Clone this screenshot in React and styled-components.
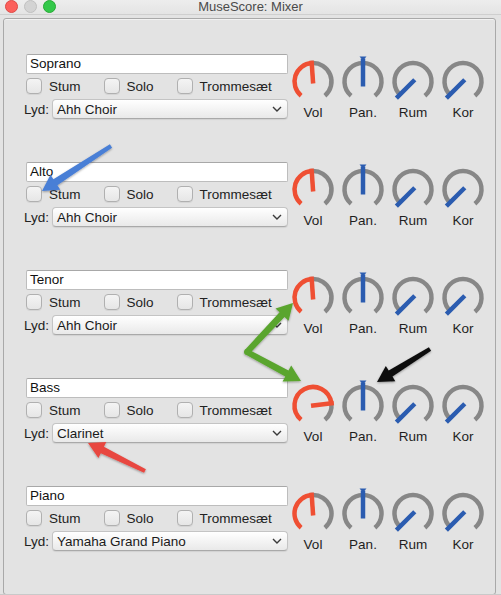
import React from "react";
import styled, { createGlobalStyle } from "styled-components";

const GlobalStyle = createGlobalStyle`
  html, body {
    margin: 0;
    padding: 0;
    background: #e3e3e3;
  }
  body {
    font-family: "Liberation Sans", Arial, sans-serif;
    font-size: 13px;
    color: #1e1e1e;
  }
`;

const Window = styled.div`
  position: relative;
  width: 501px;
  height: 595px;
  background: #e3e3e3;
  display: flex;
  flex-direction: column;
  overflow: hidden;
  box-sizing: border-box;
  border-bottom: 1px solid #c9c9c9;
`;

const TitleBar = styled.div`
  height: 14px;
  display: grid;
  grid-template-columns: 1fr auto 1fr;
  align-items: center;
  background: linear-gradient(#ededed, #e4e4e4);
  border-bottom: 1px solid #cfcfcf;
`;

const Lights = styled.div`
  display: flex;
  gap: 6px;
  padding-left: 5px;
  margin-top: -1px;
`;

const Light = styled.span`
  width: 11px;
  height: 11px;
  border-radius: 50%;
  background: ${({ $fill }) => $fill};
  border: 0.5px solid ${({ $edge }) => $edge};
`;

const Title = styled.div`
  font-size: 13px;
  color: #4a4a4a;
  line-height: 14px;
`;

const GroupBox = styled.div`
  flex: 1;
  margin: 3px 5px 2px 3px;
  border: 1px solid #a9a9a9;
  border-radius: 3px;
  padding: 35px 0 0 22px;
  box-shadow: inset 0 1px 0 #f2f2f2;
`;

const Channel = styled.div`
  display: grid;
  grid-template-columns: 262px auto;
  height: 108px;
  align-items: start;
`;

const Controls = styled.div`
  display: flex;
  flex-direction: column;
`;

const NameField = styled.div`
  height: 20px;
  box-sizing: border-box;
  background: #fff;
  border: 1px solid #bdbdbd;
  border-top-color: #a8a8a8;
  border-radius: 2px;
  padding-left: 3px;
  line-height: 18px;
  font-size: 13.5px;
  color: #111;
`;

const CheckRow = styled.div`
  display: flex;
  gap: 23px;
  margin-top: 4px;
  height: 16px;
  align-items: center;
`;

const CheckItem = styled.label`
  display: flex;
  align-items: center;
  gap: 7px;
  font-size: 13.5px;
  color: #222;
`;

const CheckBox = styled.span`
  width: 16px;
  height: 16px;
  box-sizing: border-box;
  border: 1px solid #b0b0b0;
  border-radius: 4px;
  background: linear-gradient(#f4f4f4, #e6e6e6);
  box-shadow: 0 1px 0 rgba(0, 0, 0, 0.06);
`;

const LydRow = styled.div`
  display: grid;
  grid-template-columns: auto 1fr;
  gap: 3px;
  align-items: center;
  margin-top: 5px;
`;

const LydLabel = styled.span`
  margin-left: -2px;
  font-size: 13.5px;
  color: #222;
`;

const Dropdown = styled.div`
  height: 20px;
  box-sizing: border-box;
  display: flex;
  align-items: center;
  justify-content: space-between;
  padding: 0 5px 0 4px;
  background: linear-gradient(#ffffff, #e9e9e9);
  border: 1px solid #c4c4c4;
  border-bottom-color: #a9a9a9;
  border-radius: 4px;
  box-shadow: 0 1px 1px rgba(0, 0, 0, 0.08);
  font-size: 13.5px;
  color: #1a1a1a;
`;

const Knobs = styled.div`
  display: flex;
  margin-top: 2px;
`;

const KnobCell = styled.div`
  width: 50px;
  display: flex;
  flex-direction: column;
  align-items: center;
`;

const KnobLabel = styled.span`
  margin-top: -1px;
  line-height: 16px;
  font-size: 13.5px;
  color: #1e1e1e;
`;

const Overlay = styled.svg`
  position: absolute;
  left: 0;
  top: 0;
  pointer-events: none;
`;

const GRAY = "#878787";
const RED = "#ef4f33";
const BLUE = "#2b5cb0";
const CX = 25;
const CY = 25.5;
const R = 18.5;

const pt = (deg, r) => {
  const a = (deg * Math.PI) / 180;
  return [CX + r * Math.sin(a), CY - r * Math.cos(a)];
};

const arc = (from, to) => {
  const [x1, y1] = pt(from, R);
  const [x2, y2] = pt(to, R);
  const large = to - from > 180 ? 1 : 0;
  return `M${x1} ${y1} A${R} ${R} 0 ${large} 1 ${x2} ${y2}`;
};

function Knob({ kind, angle }) {
  const lo = -140;
  const hi = 140;
  if (kind === "vol") {
    const [x1, y1] = pt(angle, -2);
    const [x2, y2] = pt(angle, 21);
    return (
      <svg width="50" height="50">
        <path d={arc(lo, angle)} stroke={RED} strokeWidth="4.5" fill="none" />
        <path d={arc(angle, hi)} stroke={GRAY} strokeWidth="4.5" fill="none" />
        <line x1={x1} y1={y1} x2={x2} y2={y2} stroke={RED} strokeWidth="4.5" />
      </svg>
    );
  }
  if (kind === "pan") {
    return (
      <svg width="50" height="50">
        <path d={arc(lo, hi)} stroke={GRAY} strokeWidth="4.5" fill="none" />
        <line x1={CX} y1={CY - 23} x2={CX} y2={CY + 5} stroke={BLUE} strokeWidth="4.5" />
        <polygon
          points={`${CX - 3.5},${CY - 25} ${CX + 3.5},${CY - 25} ${CX},${CY - 21}`}
          fill={BLUE}
        />
      </svg>
    );
  }
  const [x1, y1] = pt(-135, -2.5);
  const [x2, y2] = pt(-135, 23.5);
  return (
    <svg width="50" height="50">
      <path d={arc(lo, hi)} stroke={GRAY} strokeWidth="4.5" fill="none" />
      <line x1={x1} y1={y1} x2={x2} y2={y2} stroke={BLUE} strokeWidth="4.5" />
    </svg>
  );
}

function Chevron() {
  return (
    <svg width="10" height="6" viewBox="0 0 10 6">
      <polyline points="1,1 5,5 9,1" fill="none" stroke="#3a3a3a" strokeWidth="1.4" />
    </svg>
  );
}

// tapered skitch-style arrow: thin at the tail, wide head at the tip
function arrowPoints(x1, y1, x2, y2, head = 16, hw = 9, t0 = 2, t1 = 3.6) {
  const dx = x2 - x1;
  const dy = y2 - y1;
  const len = Math.hypot(dx, dy);
  const ux = dx / len;
  const uy = dy / len;
  const nx = -uy;
  const ny = ux;
  const bx = x2 - ux * head;
  const by = y2 - uy * head;
  const p = [
    [x1 + nx * t0, y1 + ny * t0],
    [bx + nx * t1, by + ny * t1],
    [bx + nx * hw, by + ny * hw],
    [x2, y2],
    [bx - nx * hw, by - ny * hw],
    [bx - nx * t1, by - ny * t1],
    [x1 - nx * t0, y1 - ny * t0],
  ];
  return p.map(([a, b]) => `${a.toFixed(1)},${b.toFixed(1)}`).join(" ");
}

const channels = [
  { name: "Soprano", sound: "Ahh Choir", vol: -4 },
  { name: "Alto", sound: "Ahh Choir", vol: -4 },
  { name: "Tenor", sound: "Ahh Choir", vol: -4 },
  { name: "Bass", sound: "Clarinet", vol: 83 },
  { name: "Piano", sound: "Yamaha Grand Piano", vol: -4 },
];

function ChannelStrip({ name, sound, vol }) {
  return (
    <Channel>
      <Controls>
        <NameField>{name}</NameField>
        <CheckRow>
          {["Stum", "Solo", "Trommesæt"].map((t) => (
            <CheckItem key={t}>
              <CheckBox />
              {t}
            </CheckItem>
          ))}
        </CheckRow>
        <LydRow>
          <LydLabel>Lyd:</LydLabel>
          <Dropdown>
            <span>{sound}</span>
            <Chevron />
          </Dropdown>
        </LydRow>
      </Controls>
      <Knobs>
        <KnobCell>
          <Knob kind="vol" angle={vol} />
          <KnobLabel>Vol</KnobLabel>
        </KnobCell>
        <KnobCell>
          <Knob kind="pan" />
          <KnobLabel>Pan.</KnobLabel>
        </KnobCell>
        <KnobCell>
          <Knob kind="send" />
          <KnobLabel>Rum</KnobLabel>
        </KnobCell>
        <KnobCell>
          <Knob kind="send" />
          <KnobLabel>Kor</KnobLabel>
        </KnobCell>
      </Knobs>
    </Channel>
  );
}

export default function App() {
  return (
    <>
      <GlobalStyle />
      <Window>
        <TitleBar>
          <Lights>
            <Light $fill="#fc605c" $edge="#de4a45" />
            <Light $fill="#d3d3d3" $edge="#c0c0c0" />
            <Light $fill="#34c84a" $edge="#27aa35" />
          </Lights>
          <Title>MuseScore: Mixer</Title>
          <span />
        </TitleBar>
        <GroupBox>
          {channels.map((c) => (
            <ChannelStrip key={c.name} {...c} />
          ))}
        </GroupBox>
        {/* annotation arrows drawn on top of the screenshot */}
        <Overlay width="501" height="595">
          <defs>
            <filter id="shadow" x="-20%" y="-20%" width="140%" height="140%">
              <feDropShadow dx="0" dy="1" stdDeviation="1" floodOpacity="0.35" />
            </filter>
          </defs>
          <g filter="url(#shadow)">
            <polygon points={arrowPoints(111, 146, 42, 191)} fill="#4a7fd6" />
            <polygon points={arrowPoints(247, 352, 293, 303, 16, 9, 3, 3.4)} fill="#5aa52e" />
            <polygon points={arrowPoints(247, 352, 301, 381, 16, 9, 3, 3.4)} fill="#5aa52e" />
            <circle cx="247" cy="352" r="3" fill="#5aa52e" />
            <polygon points={arrowPoints(430, 349, 377, 382)} fill="#111111" />
            <polygon points={arrowPoints(145, 471, 88, 443)} fill="#e8473f" />
          </g>
        </Overlay>
      </Window>
    </>
  );
}
